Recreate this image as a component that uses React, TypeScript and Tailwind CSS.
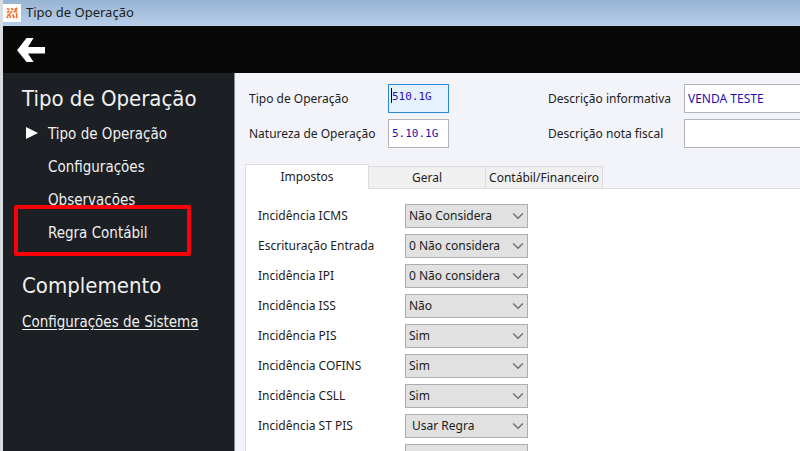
import { useState } from "react";
import { clsx } from "clsx";

const MENU = ["Tipo de Operação", "Configurações", "Observações", "Regra Contábil"];

const TABS = [
  { label: "Impostos", width: "w-[124px]" },
  { label: "Geral", width: "w-[118px]" },
  { label: "Contábil/Financeiro", width: "w-[118px]" },
];

const TAXES = [
  { id: "icms", label: "Incidência ICMS", value: "Não Considera" },
  { id: "escrituracao", label: "Escrituração Entrada", value: "0 Não considera" },
  { id: "ipi", label: "Incidência IPI", value: "0 Não considera" },
  { id: "iss", label: "Incidência ISS", value: "Não" },
  { id: "pis", label: "Incidência PIS", value: "Sim" },
  { id: "cofins", label: "Incidência COFINS", value: "Sim" },
  { id: "csll", label: "Incidência CSLL", value: "Sim" },
  { id: "st-pis", label: "Incidência ST PIS", value: "Usar Regra", indent: true },
  { id: "st-cofins", label: "", value: "", indent: true },
];

function AppIcon() {
  return (
    <svg viewBox="0 0 18 18" className="h-[18px] w-[18px] bg-white" aria-hidden="true">
      <g fill="none" stroke="#f0702c" strokeWidth="1.7">
        <path d="M4 4.4l2.4 1.4M8 4.2l2 2M11.6 6l2.6-2M4 8.4l2.4-1.2M6.6 9.4l2.4-2M10.6 8l3.4-1.4M4.2 11.4l3-1M4.4 14.2v-2M7.2 14v-2.6M9.6 10.4l1.6 3.8M13.6 14.2V8.8" />
      </g>
    </svg>
  );
}

function BackArrow() {
  return (
    <svg viewBox="0 0 28 24" className="h-6 w-7" aria-hidden="true">
      <path fill="#fff" d="M0 12.2L9.6 0H16.6L11 9H28v6.4H11L16.6 24H9.6z" />
    </svg>
  );
}

function Chevron() {
  return (
    <svg viewBox="0 0 12 8" className="pointer-events-none absolute top-2 right-1 h-2 w-3" aria-hidden="true">
      <path d="M1.2 1.4L6 6.2l4.8-4.8" fill="none" stroke="#707070" strokeWidth="1.4" />
    </svg>
  );
}

function Sidebar() {
  return (
    <nav className="w-[232px] shrink-0 border-r border-[#8a8c90] bg-[#1c1f23] pt-3 pl-[19px] font-['DejaVu_Sans_Condensed','DejaVu_Sans',sans-serif] text-[#f0f0f0]">
      <h1 className="text-[22px] leading-7">Tipo de Operação</h1>
      <ul className="relative mt-[5px] text-[15px] leading-[33px]">
        {MENU.map((item, i) => (
          <li key={item} className="flex items-center">
            <span className="w-[26px] pl-1">
              {i === 0 && (
                <svg viewBox="0 0 12 12" className="mb-1 h-3 w-3" aria-hidden="true">
                  <path d="M0 0l12 6-12 6z" fill="#fff" />
                </svg>
              )}
            </span>
            <a href="#">{item}</a>
          </li>
        ))}
        {/* highlight around the last entry */}
        <li
          aria-hidden="true"
          className="pointer-events-none absolute -bottom-[6px] -left-2 h-[51px] w-[177px] rounded-xs border-4 border-[#fb0007]"
        />
      </ul>
      <h2 className="mt-[22px] text-[22px] leading-7">Complemento</h2>
      <a href="#" className="mt-3 inline-block text-[15px] leading-5 underline underline-offset-2">
        Configurações de Sistema
      </a>
    </nav>
  );
}

function Header() {
  const input = "h-[29px] border border-[#b4b5bc] bg-white px-[3px] text-[#2411b4] outline-none";
  return (
    <div className="grid grid-cols-[139px_160px_136px_1fr] items-center gap-y-[6px] pt-[11px] pl-[14px]">
      <label htmlFor="tipo">Tipo de Operação</label>
      <div className="relative w-[61px]">
        <input
          id="tipo"
          defaultValue="510.1G"
          className="block h-[29px] w-full border border-[#2b8ad8] bg-[#e5f1fd] px-[3px] pb-1 font-['DejaVu_Sans_Mono',monospace] text-[11px] text-[#2411b4] outline-none"
        />
        <span className="absolute top-1 left-[3px] h-[15px] w-px bg-black" />
      </div>
      <label htmlFor="descricao">Descrição informativa</label>
      <input id="descricao" defaultValue="VENDA TESTE" className={input} />

      <label htmlFor="natureza">Natureza de Operação</label>
      <input
        id="natureza"
        defaultValue="5.10.1G"
        className={clsx(input, "w-[61px] font-['DejaVu_Sans_Mono',monospace] text-[11px]")}
      />
      <label htmlFor="nota">Descrição nota fiscal</label>
      <input id="nota" className={input} />
    </div>
  );
}

export default function App() {
  const [tab, setTab] = useState(0);

  return (
    <div className="flex h-screen flex-col overflow-hidden border-l-[3px] border-[#d9dde2] bg-[#f3f4fa] font-['Noto_Sans',sans-serif] text-[12px] text-[#1c1c1c]">
      <header className="flex h-[26px] shrink-0 items-center gap-[5px] bg-linear-to-b from-[#98b4d3] to-[#b8cfea] text-[13px]">
        <AppIcon />
        <span>Tipo de Operação</span>
      </header>
      <div className="flex h-[47px] shrink-0 items-center bg-[#080808] pl-[14px]">
        <button type="button" aria-label="Voltar">
          <BackArrow />
        </button>
      </div>

      <div className="flex min-h-0 flex-1">
        <Sidebar />
        <main className="flex min-w-0 flex-1 flex-col">
          <Header />
          <div role="tablist" className="mt-4 ml-[10px] flex shrink-0 items-end">
            {TABS.map((t, i) => (
              <button
                key={t.label}
                type="button"
                role="tab"
                aria-selected={tab === i}
                onClick={() => setTab(i)}
                className={clsx(
                  "border border-b-0 border-[#dcdce0] whitespace-nowrap",
                  t.width,
                  tab === i ? "z-10 -mb-px h-[25px] bg-white" : "-ml-px h-[22px] bg-[#f0f0f0]"
                )}
              >
                {t.label}
              </button>
            ))}
          </div>
          <div
            role="tabpanel"
            className="ml-[10px] flex min-h-0 flex-1 flex-col gap-[6px] overflow-hidden border-t border-l border-[#dcdce0] bg-white pt-[15px] pl-3"
          >
            {TAXES.map((tax) => (
              <div key={tax.id} className="flex h-6 shrink-0 items-center">
                <label htmlFor={tax.id} className="w-[147px]">
                  {tax.label}
                </label>
                <div className="relative w-[123px]">
                  <select
                    id={tax.id}
                    className={clsx(
                      "block h-6 w-full appearance-none border border-[#adadad] bg-[#e1e1e1] outline-none",
                      tax.indent ? "pl-[6px]" : "pl-[3px]"
                    )}
                  >
                    <option>{tax.value}</option>
                  </select>
                  <Chevron />
                </div>
              </div>
            ))}
          </div>
        </main>
      </div>
    </div>
  );
}
